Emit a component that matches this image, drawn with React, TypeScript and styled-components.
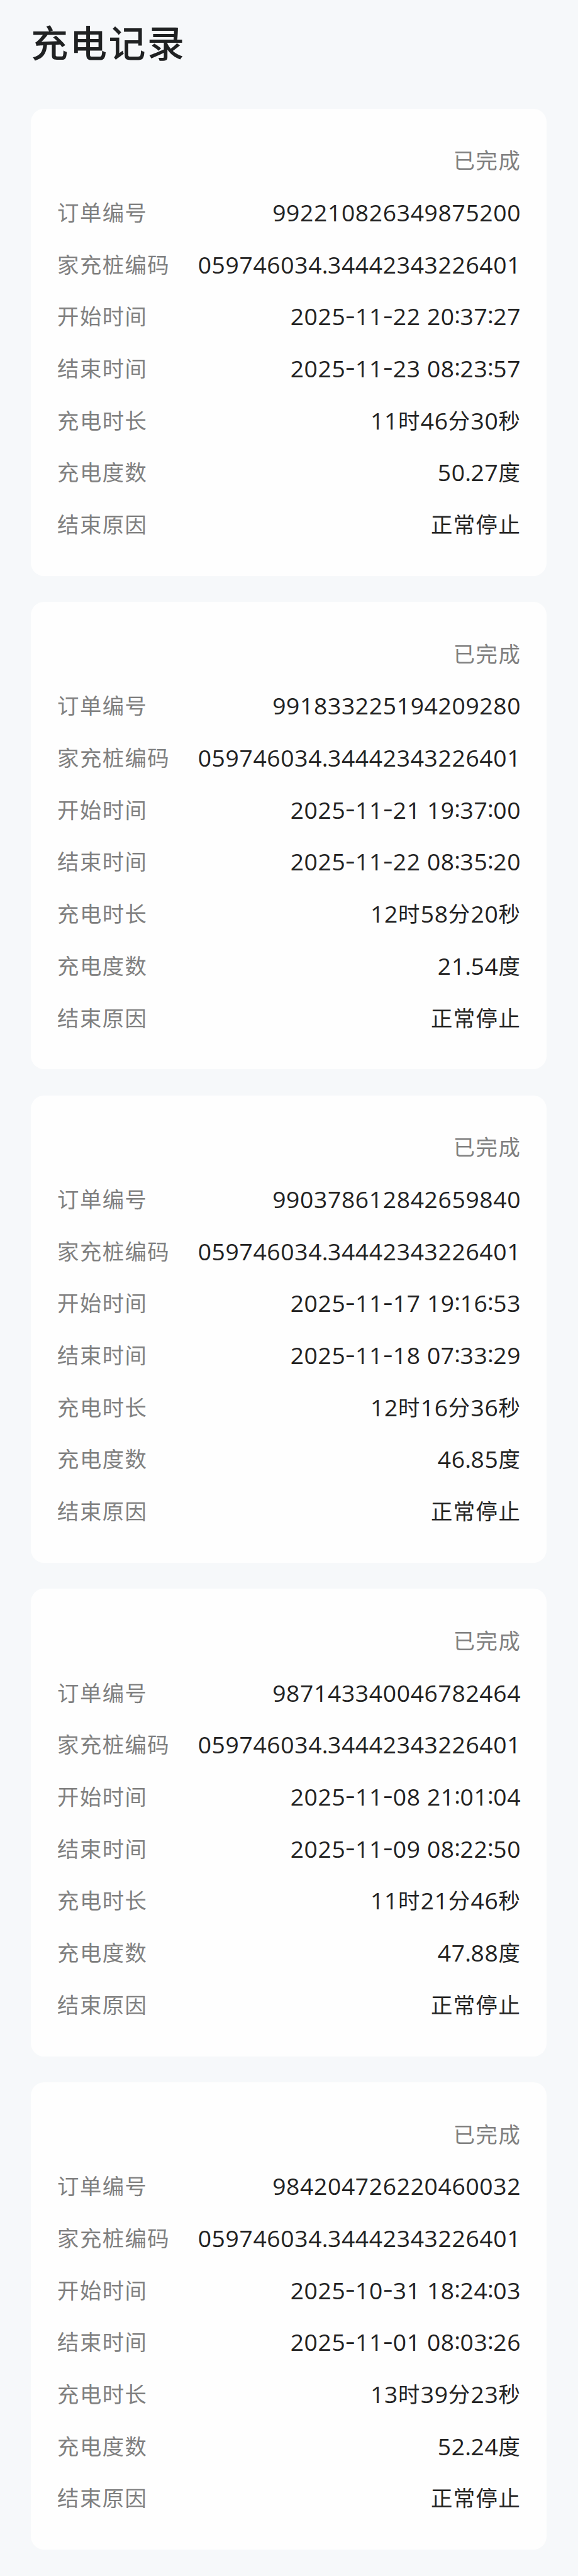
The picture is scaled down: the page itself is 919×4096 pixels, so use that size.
import React from 'react';
import styled, { createGlobalStyle } from 'styled-components';

const GlobalStyle = createGlobalStyle`
  body {
    margin: 0;
    background: #f6f8fa;
    font-family: 'Noto Sans CJK SC', sans-serif;
  }
`;

const Page = styled.main`
  box-sizing: border-box;
  width: 919px;
  height: 4096px;
  padding: 0 50px 0 49.3px;
  background: #f6f8fa;
`;

const Title = styled.h1`
  height: 172.6px;
  margin: 0;
  padding-top: 26.4px;
  box-sizing: border-box;
  color: #1f2122;
  font-size: 59px;
  font-weight: 500;
  line-height: 80px;
  letter-spacing: 2.6px;
`;

const List = styled.div`
  display: flex;
  flex-direction: column;
  gap: 41.3px;
`;

const Card = styled.section`
  box-sizing: border-box;
  height: 743.3px;
  padding: 40.7px 40.8px 40.7px 41.8px;
  border-radius: 21px;
  background: #fefefe;
`;

const Row = styled.div<{ justifyContent?: string }>`
  box-sizing: border-box;
  display: flex;
  align-items: center;
  justify-content: ${({ justifyContent = 'space-between' }) => justifyContent};
  height: 82.7px;
  padding-bottom: 3px;
  font-size: 34.4px;
  line-height: 50px;
  letter-spacing: 1.4px;
  white-space: nowrap;
`;

const GrayText = styled.span`
  color: #808080;
`;

const Value = styled.span`
  color: #222;
`;

const Digits = styled.span`
  font-family: 'Open Sans', sans-serif;
  font-size: 37.3px;
  line-height: 1;
  letter-spacing: 0.62px;
  vertical-align: -1px;
`;

const Mark = styled.span<{ width: number; raise?: number }>`
  display: inline-flex;
  justify-content: center;
  width: ${({ width }) => width}px;
  letter-spacing: 0;
  line-height: 1;
  vertical-align: ${({ raise = 0 }) => raise}px;
`;

const Dash = styled(Mark)`
  transform: scaleX(1.3);
`;

type ChargeRecord = {
  orderNo: string;
  start: string;
  end: string;
  duration: string;
  energy: string;
};

const PILE_CODE = '059746034.34442343226401';

const records: ChargeRecord[] = [
  {
    orderNo: '992210826349875200',
    start: '2025-11-22 20:37:27',
    end: '2025-11-23 08:23:57',
    duration: '11时46分30秒',
    energy: '50.27度',
  },
  {
    orderNo: '991833225194209280',
    start: '2025-11-21 19:37:00',
    end: '2025-11-22 08:35:20',
    duration: '12时58分20秒',
    energy: '21.54度',
  },
  {
    orderNo: '990378612842659840',
    start: '2025-11-17 19:16:53',
    end: '2025-11-18 07:33:29',
    duration: '12时16分36秒',
    energy: '46.85度',
  },
  {
    orderNo: '987143340046782464',
    start: '2025-11-08 21:01:04',
    end: '2025-11-09 08:22:50',
    duration: '11时21分46秒',
    energy: '47.88度',
  },
  {
    orderNo: '984204726220460032',
    start: '2025-10-31 18:24:03',
    end: '2025-11-01 08:03:26',
    duration: '13时39分23秒',
    energy: '52.24度',
  },
];

// dashes and colons sit at the middle of the digit height
function renderMark(text: string, index: number) {
  switch (text) {
    case '-':
      return (
        <Dash key={index} width={15.7} raise={2.5}>
          -
        </Dash>
      );
    case ':':
      return (
        <Mark key={index} width={8.8} raise={3}>
          :
        </Mark>
      );
    case '.':
      return (
        <Mark key={index} width={8.8}>
          .
        </Mark>
      );
    default:
      return text;
  }
}

function renderPart(part: string, index: number) {
  if (!/^[\d.:\s-]+$/.test(part)) return part;

  return <Digits key={index}>{part.split(/([-:.])/).map(renderMark)}</Digits>;
}

function Field({ label, value }: { label: string; value: string }) {
  return (
    <Row>
      <GrayText>{label}</GrayText>
      <Value>{value.split(/([\d.:\s-]+)/).filter(Boolean).map(renderPart)}</Value>
    </Row>
  );
}

export default function App() {
  return (
    <Page>
      <GlobalStyle />
      <Title>充电记录</Title>
      <List>
        {records.map((record) => (
          <Card key={record.orderNo}>
            <Row justifyContent="flex-end">
              <GrayText>已完成</GrayText>
            </Row>
            <Field label="订单编号" value={record.orderNo} />
            <Field label="家充桩编码" value={PILE_CODE} />
            <Field label="开始时间" value={record.start} />
            <Field label="结束时间" value={record.end} />
            <Field label="充电时长" value={record.duration} />
            <Field label="充电度数" value={record.energy} />
            <Field label="结束原因" value="正常停止" />
          </Card>
        ))}
      </List>
    </Page>
  );
}
